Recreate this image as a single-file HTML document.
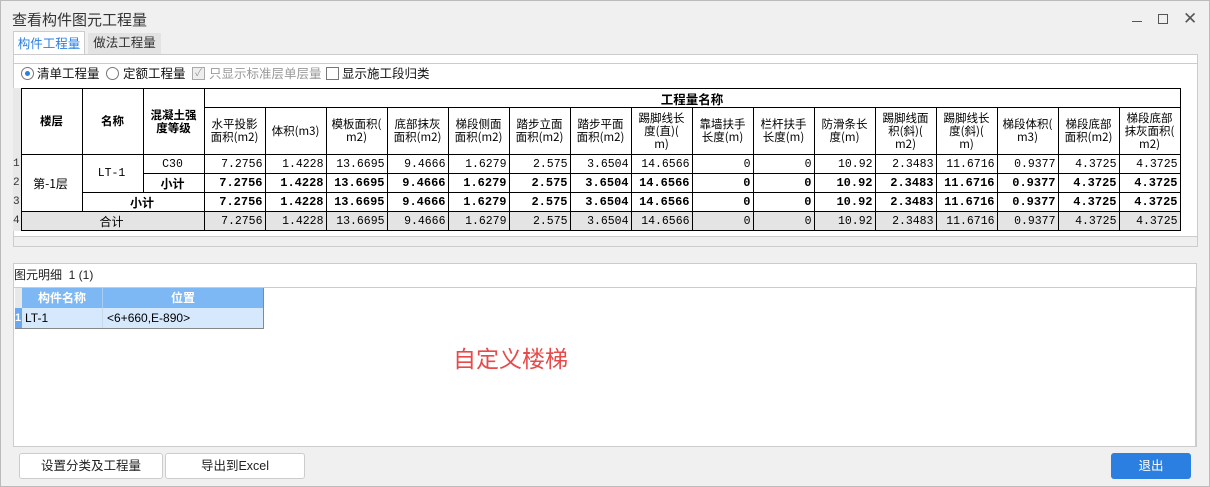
<!DOCTYPE html>
<html><head><meta charset="utf-8"><style>
*{box-sizing:border-box;margin:0;padding:0}
body{width:1210px;height:487px;background:#f0f0f0;font-family:"Liberation Sans","Noto Sans CJK SC",sans-serif;position:relative;overflow:hidden}
.a{position:absolute}
table{border-collapse:collapse;table-layout:fixed;font-family:"Noto Sans CJK SC","WenQuanYi Zen Hei",sans-serif}
.q td{border:1px solid #000;font-size:11.5px;height:19px;padding:0 2px 0 0;text-align:right;white-space:nowrap;overflow:hidden;line-height:17px;font-family:"Liberation Mono","Noto Sans CJK SC",monospace}
.q td.h{text-align:center;font-size:11.5px;line-height:13px;padding:0;font-family:"Noto Sans CJK SC",sans-serif}
.q td.b{font-weight:bold;text-align:center}
.q td.c{text-align:center;font-family:"Noto Sans CJK SC",sans-serif}
.q .k td{font-weight:bold;font-size:12px}
.q .g td{background:#e4e4e4}
.q td.n{border:none;border-right:1px solid #000;background:#e8e8e8;text-align:left;padding:0;font-size:11px;color:#333}
.btn{position:absolute;top:453px;height:26px;border:1px solid #ccc;border-radius:3px;background:#fff;font-size:12.5px;text-align:center;line-height:24px;color:#222}
</style></head><body>
<div class="a" style="left:0;top:0;width:1210px;height:487px;border:1px solid #bbb"></div>
<div class="a" style="left:12px;top:9px;font-size:15px;color:#333">查看构件图元工程量</div>
<div class="a" style="left:1132px;top:21px;width:10px;height:1px;background:#555"></div>
<div class="a" style="left:1158px;top:14px;width:10px;height:10px;border:1px solid #555"></div>
<div class="a" style="left:1183px;top:9px;font-size:17px;color:#555">✕</div>
<div class="a" style="left:13px;top:31px;width:72px;height:24px;background:#fff;border:1px solid #ccc;border-bottom:none;font-size:12.5px;color:#2b7fe0;text-align:center;line-height:24px">构件工程量</div>
<div class="a" style="left:88px;top:33px;width:73px;height:21px;background:#e3e3e3;font-size:12.5px;color:#333;text-align:center;line-height:21px">做法工程量</div>
<div class="a" style="left:13px;top:54px;width:1185px;height:193px;background:#fff;border:1px solid #ccc"></div>
<div class="a" style="left:13px;top:63px;width:1184px;border-top:1px solid #ccc"></div>
<div class="a" style="left:12px;top:64px;width:1185px;height:22px;font-size:12.5px;line-height:20px;color:#111">
<span class="a" style="left:9px;top:3px;width:13px;height:13px;border:1px solid #777;border-radius:50%;background:#fff"></span><span class="a" style="left:13px;top:7px;width:5px;height:5px;border-radius:50%;background:#2b7fe0"></span>
<span class="a" style="left:25px">清单工程量</span>
<span class="a" style="left:94px;top:3px;width:13px;height:13px;border:1px solid #777;border-radius:50%"></span>
<span class="a" style="left:111px">定额工程量</span>
<span class="a" style="left:180px;top:3px;width:13px;height:13px;border:1px solid #aaa;background:#eee;font-size:10px;line-height:11px;color:#999;text-align:center">✓</span>
<span class="a" style="left:197px;color:#999">只显示标准层单层量</span>
<span class="a" style="left:314px;top:3px;width:13px;height:13px;border:1px solid #777"></span>
<span class="a" style="left:330px">显示施工段归类</span>
</div>
<div class="a" style="left:13px;top:88px;width:8px;height:65px;background:#e8e8e8"></div>
<table class="a q" style="left:13px;top:88px;width:1167px">
<colgroup><col style="width:8px"><col style="width:61px"><col style="width:61px"><col style="width:61px"><col span="16" style="width:61px"></colgroup>
<tr style="height:18px"><td class="n" rowspan="2" style="border-right:1px solid #000"></td><td class="h b" rowspan="2">楼层</td><td class="h b" rowspan="2">名称</td><td class="h b" rowspan="2">混凝土强<br>度等级</td><td class="h b" colspan="16" style="font-size:12.5px">工程量名称</td></tr>
<tr style="height:47px"><td class="h">水平投影<br>面积(m2)</td><td class="h">体积(m3)</td><td class="h">模板面积(<br>m2)</td><td class="h">底部抹灰<br>面积(m2)</td><td class="h">梯段侧面<br>面积(m2)</td><td class="h">踏步立面<br>面积(m2)</td><td class="h">踏步平面<br>面积(m2)</td><td class="h">踢脚线长<br>度(直)(<br>m)</td><td class="h">靠墙扶手<br>长度(m)</td><td class="h">栏杆扶手<br>长度(m)</td><td class="h">防滑条长<br>度(m)</td><td class="h">踢脚线面<br>积(斜)(<br>m2)</td><td class="h">踢脚线长<br>度(斜)(<br>m)</td><td class="h">梯段体积(<br>m3)</td><td class="h">梯段底部<br>面积(m2)</td><td class="h">梯段底部<br>抹灰面积(<br>m2)</td></tr>
<tr><td class="n">1</td><td rowspan="3" class="c" style="font-size:12px">第-1层</td><td rowspan="2" style="text-align:center">LT-1</td><td style="text-align:center">C30</td><td>7.2756</td><td>1.4228</td><td>13.6695</td><td>9.4666</td><td>1.6279</td><td>2.575</td><td>3.6504</td><td>14.6566</td><td>0</td><td>0</td><td>10.92</td><td>2.3483</td><td>11.6716</td><td>0.9377</td><td>4.3725</td><td>4.3725</td></tr>
<tr class="k"><td class="n" style="font-weight:normal">2</td><td class="c">小计</td><td>7.2756</td><td>1.4228</td><td>13.6695</td><td>9.4666</td><td>1.6279</td><td>2.575</td><td>3.6504</td><td>14.6566</td><td>0</td><td>0</td><td>10.92</td><td>2.3483</td><td>11.6716</td><td>0.9377</td><td>4.3725</td><td>4.3725</td></tr>
<tr class="k"><td class="n" style="font-weight:normal">3</td><td colspan="2" class="c">小计</td><td>7.2756</td><td>1.4228</td><td>13.6695</td><td>9.4666</td><td>1.6279</td><td>2.575</td><td>3.6504</td><td>14.6566</td><td>0</td><td>0</td><td>10.92</td><td>2.3483</td><td>11.6716</td><td>0.9377</td><td>4.3725</td><td>4.3725</td></tr>
<tr class="g"><td class="n">4</td><td colspan="3" class="c" style="font-size:12px">合计</td><td>7.2756</td><td>1.4228</td><td>13.6695</td><td>9.4666</td><td>1.6279</td><td>2.575</td><td>3.6504</td><td>14.6566</td><td>0</td><td>0</td><td>10.92</td><td>2.3483</td><td>11.6716</td><td>0.9377</td><td>4.3725</td><td>4.3725</td></tr>
</table>
<div class="a" style="left:14px;top:236px;width:1183px;height:10px;background:#efefef;border-top:1px solid #ccc"></div>
<div class="a" style="left:13px;top:263px;width:1184px;height:184px;background:#fff;border:1px solid #ccc"></div>
<div class="a" style="left:14px;top:264px;font-size:12px;line-height:22px;color:#222">图元明细&nbsp; 1 (1)</div>
<div class="a" style="left:14px;top:287px;width:1183px;height:159px;border-top:1px solid #ccc;border-right:2px solid #ccc"></div>
<div class="a" style="left:15px;top:288px;width:249px;height:41px;border-right:2px solid #888;border-bottom:2px solid #888"></div>
<div class="a" style="left:15px;top:288px;width:7px;height:20px;background:#e8e8e8"></div>
<div class="a" style="left:15px;top:308px;width:7px;height:20px;background:#6aa8f0;color:#fff;font-size:11px;font-weight:bold;line-height:20px">1</div>
<div class="a" style="left:22px;top:288px;width:81px;height:20px;background:#7db8f5;color:#fff;font-weight:bold;font-size:12px;text-align:center;line-height:20px;border-right:1px solid #a8cdf5">构件名称</div>
<div class="a" style="left:103px;top:288px;width:160px;height:20px;background:#7db8f5;color:#fff;font-weight:bold;font-size:12px;text-align:center;line-height:20px">位置</div>
<div class="a" style="left:22px;top:308px;width:81px;height:20px;background:#d6e8fb;font-size:12px;line-height:20px;padding-left:3px;border-right:1px solid #c8d8e8">LT-1</div>
<div class="a" style="left:103px;top:308px;width:160px;height:20px;background:#d6e8fb;font-size:12px;line-height:20px;padding-left:4px">&lt;6+660,E-890&gt;</div>
<div class="a" style="left:453px;top:340px;font-size:23px;color:#e84a4a">自定义楼梯</div>
<div class="btn" style="left:19px;width:144px">设置分类及工程量</div>
<div class="btn" style="left:165px;width:140px">导出到Excel</div>
<div class="btn" style="left:1111px;width:80px;background:#2b7fe0;border-color:#2b7fe0;color:#fff">退出</div>
</body></html>
